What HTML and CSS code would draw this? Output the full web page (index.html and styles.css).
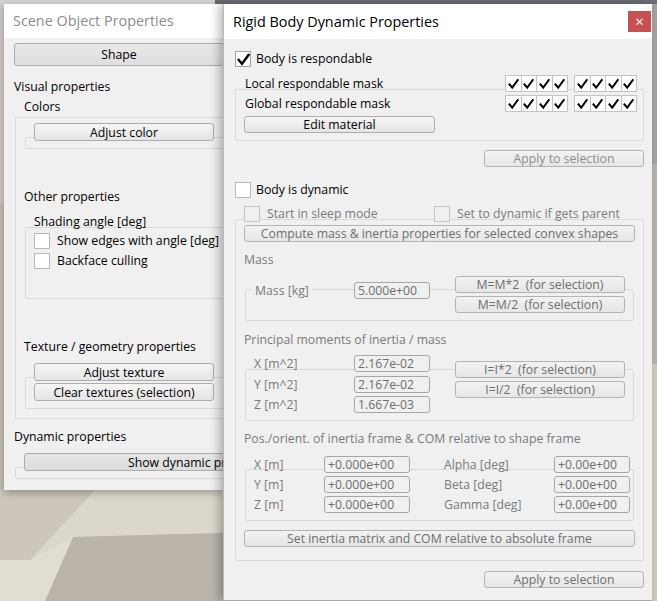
FILE: index.html
```html
<!DOCTYPE html>
<html>
<head>
<meta charset="utf-8">
<title>Rigid Body Dynamic Properties</title>
<link rel="stylesheet" href="styles.css">
</head>
<body>
<svg width="0" height="0" class="defs">
  <symbol id="tick" viewBox="0 0 12 12"><path d="M1.6 6.4 L4.6 10 L10.6 1.8" fill="none" stroke="#000" stroke-width="2.2" stroke-linecap="square" stroke-linejoin="miter"/></symbol>
</svg>
<div class="desktop">
  <svg class="scene" width="657" height="601" viewBox="0 0 657 601">
    <rect x="0" y="0" width="657" height="601" fill="#cbc6bb"/>
    <rect x="0" y="0" width="657" height="4" fill="#6b6e73"/>
    <rect x="0" y="0" width="215" height="4" fill="#d2d2d2"/>
    <rect x="0" y="4" width="4" height="200" fill="#cfcbc3"/>
    <rect x="0" y="204" width="4" height="300" fill="#c4bfb4"/>
    <rect x="652" y="4" width="5" height="160" fill="#a3a3a3"/>
    <rect x="652" y="164" width="5" height="200" fill="#b7b2a8"/>
    <rect x="652" y="364" width="5" height="240" fill="#cfc9bd"/>
    <polygon points="0,490 95,490 30,560 0,560" fill="#cdc7bb"/>
    <polygon points="95,490 223,490 223,533 73,537 30,560" fill="#dcd7cb"/>
    <polygon points="73,537 223,533 223,601 45,601" fill="#bab4aa"/>
    <polygon points="0,560 30,560 73,537 45,601 0,601" fill="#e1ddd2"/>
  </svg>

  <section class="win back">
    <header class="titlebar"><span class="wtitle">Scene Object Properties</span></header>
    <div class="bbody">
      <button class="btn shape">Shape</button>
      <div class="lbl vis">Visual properties</div>
      <div class="lbl indent colors">Colors</div>
      <div class="box outer">
        <div class="box inner colorsbox"><button class="btn bw180 pull">Adjust color</button></div>
        <div class="lbl sub other">Other properties</div>
        <div class="box inner shadebox">
          <div class="gtitle">Shading angle [deg]</div>
          <label class="chk c1"><span class="cb white"></span>Show edges with angle [deg]</label>
          <label class="chk c2"><span class="cb white"></span>Backface culling</label>
        </div>
        <div class="lbl sub tex">Texture / geometry properties</div>
        <div class="box inner texbox">
          <button class="btn bw180 pull">Adjust texture</button>
          <button class="btn bw180 second">Clear textures (selection)</button>
        </div>
      </div>
      <div class="lbl dynl">Dynamic properties</div>
      <div class="box dynbox"><button class="btn showdyn">Show dynamic properties</button></div>
    </div>
  </section>

  <section class="win front">
    <header class="titlebar ftitle">
      <span class="wtitle dark">Rigid Body Dynamic Properties</span>
      <span class="close">×</span>
    </header>
    <div class="fbody">
      <label class="chk resp-chk"><span class="cb white"><svg class="tk"><use href="#tick"/></svg></span>Body is respondable</label>

      <div class="box resp">
        <div class="mrow first">
          <span>Local respondable mask</span>
          <span class="masks">
            <span class="mgrp"><span class="mc"><svg><use href="#tick"/></svg></span><span class="mc"><svg><use href="#tick"/></svg></span><span class="mc"><svg><use href="#tick"/></svg></span><span class="mc"><svg><use href="#tick"/></svg></span></span>
            <span class="mgrp"><span class="mc"><svg><use href="#tick"/></svg></span><span class="mc"><svg><use href="#tick"/></svg></span><span class="mc"><svg><use href="#tick"/></svg></span><span class="mc"><svg><use href="#tick"/></svg></span></span>
          </span>
        </div>
        <div class="mrow">
          <span>Global respondable mask</span>
          <span class="masks">
            <span class="mgrp"><span class="mc"><svg><use href="#tick"/></svg></span><span class="mc"><svg><use href="#tick"/></svg></span><span class="mc"><svg><use href="#tick"/></svg></span><span class="mc"><svg><use href="#tick"/></svg></span></span>
            <span class="mgrp"><span class="mc"><svg><use href="#tick"/></svg></span><span class="mc"><svg><use href="#tick"/></svg></span><span class="mc"><svg><use href="#tick"/></svg></span><span class="mc"><svg><use href="#tick"/></svg></span></span>
          </span>
        </div>
        <button class="btn edit">Edit material</button>
      </div>

      <div class="actions a1"><button class="btn dis apply light">Apply to selection</button></div>

      <label class="chk dyn-chk"><span class="cb white"></span>Body is dynamic</label>

      <div class="box dgroup">
        <div class="sleeprow">
          <label class="chk dis"><span class="cb off"></span>Start in sleep mode</label>
          <label class="chk dis"><span class="cb off"></span>Set to dynamic if gets parent</label>
        </div>
        <button class="btn dis full compute">Compute mass &amp; inertia properties for selected convex shapes</button>

        <div class="sec">Mass</div>
        <div class="box sbox mass">
          <div class="massgrid">
            <div class="masslead">
              <span class="glabel">Mass [kg]</span>
              <span class="inp w76">5.000e+00</span>
            </div>
            <div class="btncol">
              <button class="btn dis sel">M=M*2  (for selection)</button>
              <button class="btn dis sel">M=M/2  (for selection)</button>
            </div>
          </div>
        </div>

        <div class="sec s2">Principal moments of inertia / mass</div>
        <div class="box sbox inertia">
          <div class="igrid">
            <div class="ilabels">
              <span class="dl">X [m^2]</span><span class="inp w76">2.167e-02</span>
              <span class="dl">Y [m^2]</span><span class="inp w76">2.167e-02</span>
              <span class="dl">Z [m^2]</span><span class="inp w76">1.667e-03</span>
            </div>
            <div class="btncol ib">
              <button class="btn dis sel">I=I*2  (for selection)</button>
              <button class="btn dis sel">I=I/2  (for selection)</button>
            </div>
          </div>
        </div>

        <div class="sec s3">Pos./orient. of inertia frame &amp; COM relative to shape frame</div>
        <div class="box sbox pos">
          <div class="pgrid">
            <span class="dl">X [m]</span><span class="inp w86">+0.000e+00</span><span class="dl">Alpha [deg]</span><span class="inp w76">+0.00e+00</span>
            <span class="dl">Y [m]</span><span class="inp w86">+0.000e+00</span><span class="dl">Beta [deg]</span><span class="inp w76">+0.00e+00</span>
            <span class="dl">Z [m]</span><span class="inp w86">+0.000e+00</span><span class="dl">Gamma [deg]</span><span class="inp w76">+0.00e+00</span>
          </div>
        </div>

        <button class="btn dis full setabs">Set inertia matrix and COM relative to absolute frame</button>
      </div>

      <div class="actions a2"><button class="btn dis apply">Apply to selection</button></div>
    </div>
  </section>
</div>
</body>
</html>
```

FILE: styles.css
```css
* { box-sizing: border-box; }
html, body { margin: 0; padding: 0; }
body {
  width: 657px; height: 601px; overflow: hidden;
  font-family: "Open Sans", "Noto Sans", sans-serif;
  font-size: 12.25px; line-height: 16px; color: #000;
}
.defs { position: absolute; width: 0; height: 0; }
.desktop { position: relative; width: 657px; height: 601px; overflow: hidden; background: #cbc6bb; }
.scene { position: absolute; left: 0; top: 0; }

.win { position: absolute; background: #f0f0f0; display: flex; flex-direction: column; overflow: hidden; }
.win.back { left: 4px; top: 4px; width: 219px; height: 486px; box-shadow: 0 3px 8px rgba(0,0,0,.28); }
.win.front { left: 223px; top: 4px; width: 429px; height: 597px; border-left: 1px solid #b8b8b8; border-bottom: 1px solid #a9a9a9; box-shadow: -4px 0 9px rgba(0,0,0,.28); }

.titlebar { flex: none; height: 34px; background: #fff; display: flex; align-items: center; padding-left: 9px; }
.ftitle { height: 35px; padding-left: 9px; position: relative; }
.wtitle { font-family: "Open Sans", "Noto Sans", sans-serif; font-size: 14.4px; color: #8c8c8c; white-space: nowrap; }
.wtitle.dark { color: #000; }
.close {
  position: absolute; right: 1px; top: 7px; width: 23px; height: 21px;
  background: #c75050; color: #fff; font-size: 15px; line-height: 20px; text-align: center;
}

/* generic controls */
.btn {
  display: block; height: 17px; padding: 0; margin: 0;
  border: 1px solid #adadad; border-radius: 3px;
  background: linear-gradient(#f5f5f5, #e5e5e5);
  font: inherit; line-height: 14px; color: #000; text-align: center;
  white-space: pre; position: relative;
}
.btn.dis { color: #6e6e6e; border-color: #b4b4b4; background: linear-gradient(#f2f2f2, #e6e6e6); }
.btn.dis.light { color: #8e8e8e; }

.box { border: 1px solid #d9d9d9; border-radius: 2px; }

.chk { display: flex; align-items: center; height: 16px; white-space: nowrap; }
.cb { flex: none; width: 16px; height: 16px; border: 1px solid #a9a9a9; margin-right: 7px; display: flex; align-items: center; justify-content: center; }
.cb.white { background: #fff; border-color: #b8b8b8; }
.cb.off { background: #f0f0f0; border-color: #c6c6c6; }
.cb .tk { width: 13px; height: 13px; }
.chk.dis { color: #7a7a7a; }

.inp {
  display: block; height: 17px; border: 1px solid #a7a7a7; border-radius: 3px;
  background: #f0f0f0; color: #6e6e6e; padding-left: 3px; line-height: 15px; white-space: nowrap;
}
.w76 { width: 76px; }
.w86 { width: 86px; }
.dl { color: #7a7a7a; line-height: 17px; white-space: nowrap; }

/* ---------- back window ---------- */
.bbody { padding-left: 10px; }
.shape { width: 210px; height: 23px; margin-top: 5px; line-height: 20px; background: linear-gradient(#e8e8e8, #dedede); }
.lbl { white-space: nowrap; }
.vis { margin-top: 13px; }
.indent { margin-left: 10px; }
.colors { margin-top: 4px; }
.outer { margin: 2px 0 0 1px; width: 240px; padding-bottom: 9px; }
.inner { margin-left: 9px; }
.bw180 { width: 180px; height: 18px; margin-left: 8px; line-height: 15px; }
.pull { margin-top: -15px; }
.colorsbox { margin-top: 19px; padding-bottom: 7px; }
.sub { margin-left: 8px; }
.other { margin-top: 40px; }
.shadebox { margin-top: 22px; padding-bottom: 29px; }
.gtitle { margin: -14px 0 0 8px; white-space: nowrap; }
.shadebox .chk { margin-left: 8px; }
.c1 { margin-top: 3px; }
.c2 { margin-top: 4px; }
.tex { margin-top: 40px; }
.texbox { margin-top: 22px; padding-bottom: 7px; }
.second { margin-top: 2px; }
.dynl { margin-top: 10px; }
.dynbox { margin: 22px 0 0 1px; width: 240px; padding-bottom: 7px; }
.showdyn { margin: -15px 0 0 8px; width: 300px; height: 18px; text-align: left; padding-left: 103px; line-height: 15px; background: linear-gradient(#e6e6e6, #dcdcdc); overflow: hidden; }

/* ---------- front window ---------- */
.fbody { padding: 0 8px 0 11px; }
.resp-chk { margin-top: 12px; }
.resp-chk .cb { border-color: #a3a3a3; margin-right: 5px; }
.resp { margin-top: 22px; padding: 0 6px 7px 0; }
.mrow { display: flex; justify-content: space-between; align-items: center; height: 17px; margin-top: 3px; padding-left: 9px; }
.mrow.first { margin-top: -15px; }
.masks { display: flex; gap: 6px; }
.mgrp { display: flex; gap: 1px; background: #c4c4c4; border: 1px solid #c4c4c4; }
.mc { width: 14.5px; height: 15px; background: #fff; display: flex; align-items: center; justify-content: center; }
.mc svg { width: 11px; height: 12px; }
.edit { width: 191px; margin: 4px 0 0 8px; }

.actions { display: flex; justify-content: flex-end; }
.apply { width: 160px; }
.a1 { margin-top: 9px; }
.a2 { margin-top: 10px; }
.dyn-chk { margin-top: 15px; }
.dyn-chk .cb { margin-right: 5px; }

.dgroup { margin-top: 21px; padding-bottom: 13px; }
.sleeprow { display: grid; grid-template-columns: 190px 1fr; margin: -14px 0 0 8px; }
.full { width: 391px; margin-left: 8px; }
.compute { margin-top: 3px; }
.sec { color: #7a7a7a; margin: 10px 0 0 8px; white-space: nowrap; }
.sec.s2 { margin-top: 11px; }
.sec.s3 { margin-top: 10px; }
.sbox { margin: 21px 9px 0 9px; padding-bottom: 7px; }
.sbox.pos { margin-top: 22px; }

.massgrid { display: grid; grid-template-columns: 203px 170px; margin: -14px 0 0 6px; }
.masslead { display: grid; grid-template-columns: 102px 76px; align-items: center; margin-top: 6px; align-self: start; }
.glabel { justify-self: start; background: #f0f0f0; color: #7a7a7a; padding: 0 3px; line-height: 17px; }
.btncol { display: flex; flex-direction: column; gap: 3px; }
.sel { width: 170px; }

.igrid { display: grid; grid-template-columns: 201px 170px; margin: -15px 0 0 8px; }
.ilabels { display: grid; grid-template-columns: 100px 76px; row-gap: 3.5px; }
.ib { margin-top: 6px; }

.pgrid { display: grid; grid-template-columns: 70px 120px 110px 76px; row-gap: 3px; margin: -14px 0 0 8px; }

.setabs { margin-top: 9px; }
```
